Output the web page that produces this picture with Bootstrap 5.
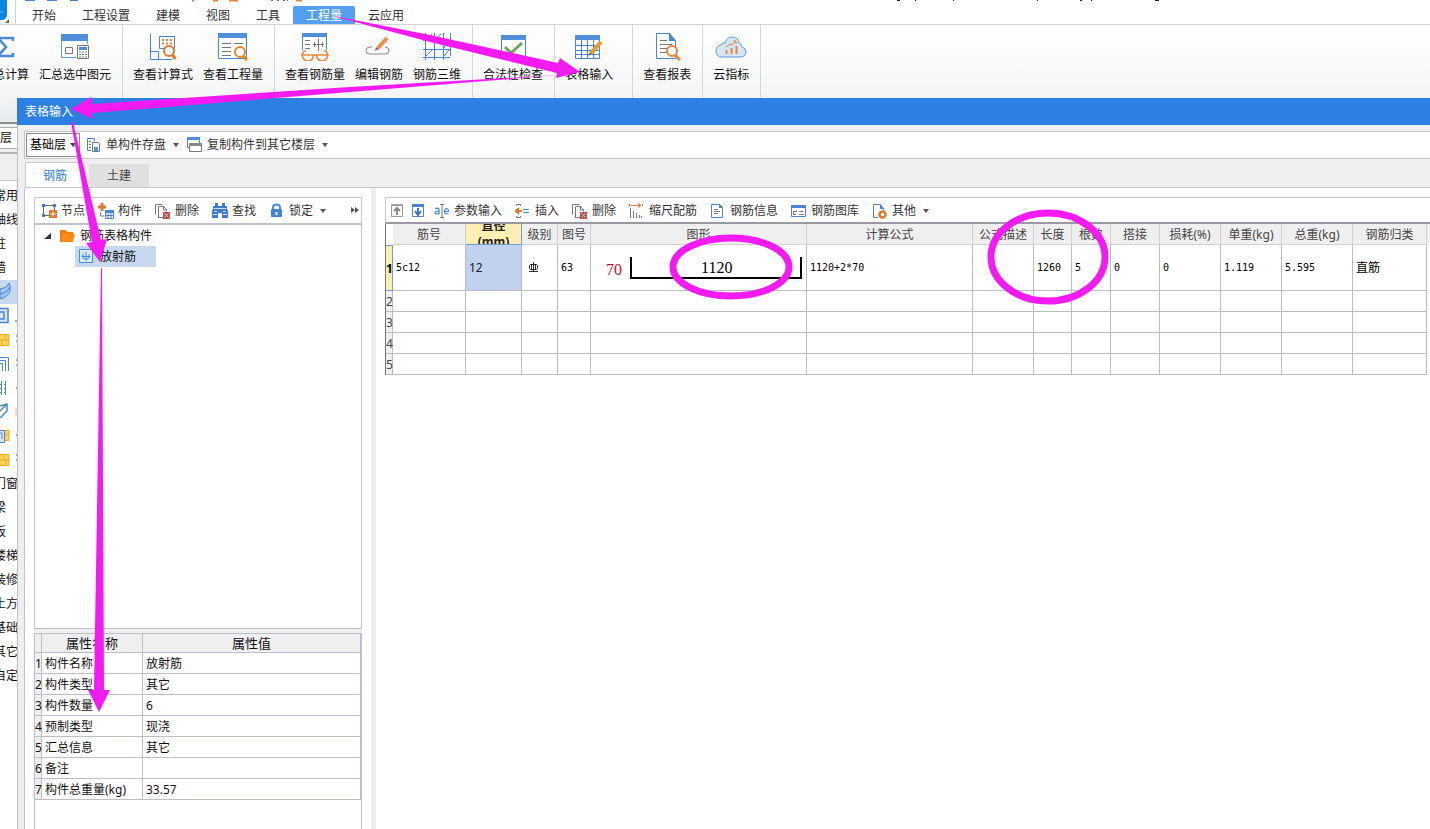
<!DOCTYPE html>
<html lang="zh-CN">
<head>
<meta charset="utf-8">
<meta name="viewport" content="width=device-width, initial-scale=1">
<title>表格输入</title>
<link href="https://cdn.jsdelivr.net/npm/bootstrap@5.3.0/dist/css/bootstrap.min.css" rel="stylesheet">
<style>
  body { font: 12px/16px "Noto Sans", "Noto Sans CJK SC", sans-serif; color: #111; background: #fff; overflow: hidden; }
  svg { display: block; flex: none; }
  a { color: inherit; text-decoration: none; }
  button { font: inherit; color: inherit; border: 0; background: none; padding: 0; white-space: nowrap; }

  .menu-strip { height: 25px; padding: 6px 0 0 19px; border-bottom: 1px solid #d2d2d2; }
  .menu-strip a { padding: 1px 13px 0; line-height: 17px; color: #333; }
  .menu-strip a.active { background: #559ff0; color: #fff; border-radius: 2px 2px 0 0; }
  .app-logo { top: 0; left: 0; }

  .ribbon { height: 73px; background: linear-gradient(#fff, #f4f5f5); }
  .ribbon-group { gap: 10px; padding: 8px 11px 0 10px; border-right: 1px solid #d5d8da; }
  .ribbon-group.first-group { margin-left: -29px; }
  .ribbon-group.wide-end { padding-right: 19px; }
  .ribbon-group button { display: flex; flex-direction: column; align-items: center; gap: 6px; align-self: flex-start; }

  .rail { width: 17px; background: #fff; }
  .rail-top { height: 26px; background: linear-gradient(#f4f5f5, #e6eaea); border-bottom: 2px solid #8d9193; }
  .rail-floor { height: 22px; margin: 3px 0; line-height: 20px; border: 1px solid #aaa; border-left: 0; border-right: 0; }
  .rail-head { height: 29px; background: #efefef; border-top: 2px solid #b4b4b4; border-bottom: 1px solid #c8c8c8; }
  .rail-bg { background: #efefef; }
  .rail ul { margin: 3px 0 0; }
  .rail li { height: 24px; line-height: 24px; white-space: nowrap; }
  .rail li a { margin-left: -6px; }
  .rail li.chosen { background: #c8d8ee; }

  .dialog-box { background: #efefef; box-shadow: inset 1px 0 #b9bdc6; }
  .dialog-title { height: 27px; padding-left: 8px; background: #2b80e2; color: #fff; line-height: 28px; }
  .file-bar { height: 28px; margin: 6px 0 0 7px; padding-left: 1px; background: #fff; border: 1px solid #c4c4c4; border-right: 0; }
  .floor-select { width: 54px; height: 24px; margin-right: 6px; padding: 0 0 0 3px; font: inherit; line-height: 22px; color: #000; border: 1px solid #8c8c8c; border-radius: 0; background-color: #fff; background-position: right 3px center; background-size: 6px 4px;
    background-image: url("data:image/svg+xml,%3csvg xmlns='http://www.w3.org/2000/svg' viewBox='0 0 6 4'%3e%3cpath d='M0 0h6L3 4z' fill='%23444'/%3e%3c/svg%3e"); }
  .caret { width: 0; border: 3px solid transparent; border-top: 4px solid #555; border-bottom: 0; margin-left: 3px; }
  .tool { display: flex; align-items: center; gap: 4px; color: #333; }

  .page-tabs { margin: 4px 0 0 8px; height: 25px; border-bottom: 1px solid #c8c8c8; }
  .page-tabs button { width: 60px; padding-top: 1px; text-align: center; color: #444; background: #e0e0e0; height: 23px; border-radius: 2px 2px 0 0; }
  .page-tabs button.active { height: 25px; background: #fff; color: #2b7bd8; border: 1px solid #c8c8c8; border-bottom: 0; }
  .page-body { margin-left: 7px; background: #fff; border-left: 1px solid #c4c4c4; }

  .left-pane { width: 346px; padding: 9px 9px 0; }
  .tool-row { height: 26px; gap: 13px; border: 1px solid #c8c8c8; border-bottom: 0; }
  .left-pane .tool-row { padding: 0 2px 0 6px; }
  .tree-box { height: 406px; border: 1px solid #c0c0c8; border-top: 2px solid #c0c4cc; padding: 0 0 0 9px; }
  .tree-row { height: 21px; gap: 4px; }
  .tree-row.child { width: 81px; margin-left: 31px; padding-left: 4px; gap: 6px; background: #c8d8ee; }
  .divider { width: 5px; background: #eee; }
  .h-divider { height: 4px; background: #efefef; }

  table { border-collapse: separate; border-spacing: 0; table-layout: fixed; }
  th { font-weight: 400; text-align: center; background: #efefef; }
  .prop-box { border: 1px solid #bcbfca; border-bottom: 0; }
  .prop-table { width: 100%; }
  .prop-table th, .prop-table td { height: 21px; padding: 1px 0 0 3px; border-right: 1px solid #bcbfca; border-bottom: 1px solid #bcbfca; white-space: nowrap; }
  .prop-table thead th { height: 19px; padding: 0; font-size: 13px; }
  .prop-table tbody th, .grid-table tbody th { padding: 1px 0 0; }
  .w-num { width: 7px; } .w-name { width: 101px; }

  .right-pane { min-width: 0; padding: 9px 0 0 9px; }
  .right-pane .tool-row { height: 27px; padding: 1px 0 0 3px; border-bottom: 2px solid #9a98a4; border-right: 0; }
  .arrow-pair { gap: 4px; margin-right: -5px; }
  .grid-box { border-left: 1px solid #777; }
  .grid-table { width: 1041px; flex: none; }
  .grid-table th, .grid-table td { height: 21px; padding: 0 0 0 3px; border-right: 1px solid #bcbcbc; border-bottom: 1px solid #bcbcbc; white-space: nowrap; }
  .grid-table thead th { padding: 2px 0 0; color: #444; border-color: #d2d2d2; }
  .grid-table thead th.corner { background: #fff; border-color: #fff; }
  .grid-table tbody td { font-family: "DejaVu Sans Mono", "Noto Sans CJK SC", monospace; font-size: 10px; color: #000; }
  .grid-table td.han { font-size: 12px; }
  .grid-table .first-row > * { height: 46px; }
  .grid-table thead th.hot { padding: 0; background: #fdefb4; color: #222; font-weight: 700; border-color: #6da0d8; }
  .hot div { height: 20px; line-height: 16px; overflow: hidden; display: flex; align-items: center; justify-content: center; }
  .grid-table tbody th { font-size: 12px; color: #444; }
  .grid-table tbody .first-row th { background: #fdefb4; font-weight: 700; color: #000; border: 1px solid #6da0d8; border-left: 0; }
  .grid-table tbody td.hot-cell { background: #c1d1f0; font-family: inherit; font-size: 12px; color: #222; }
  .grid-rest { height: 21px; background: #efefef; }
  .shape-text { font: 16px "Liberation Serif", serif; }
  .marks { top: 0; left: 0; pointer-events: none; }
</style>
</head>
<body class="d-flex flex-column min-vh-100 position-relative">

<header class="menu-strip position-relative">
  <svg class="app-logo position-absolute" width="1200" height="24" viewBox="0 0 1200 24">
    <path d="M0 0h7v14q0 6-6 6H0z" fill="#0b83e8"/><path d="M0 12h3" stroke="#7cc4fb"/>
    <path d="M9 19v4H5z" fill="#666"/><path d="M15.500 0v24" stroke="#d2d2d2"/>
    <path d="M25 0h10M47 0h10M70 0h8" stroke="#4b84cf" stroke-width="2"/>
    <path d="M192 0h2M213 0h5M229 0h9M296 0h6" stroke="#e8853a" stroke-width="3"/><path d="M271 0h2M277 0h2M283 0h2M287 0h1" stroke="#666" stroke-width="2"/>
    <path d="M897 0h3M915 0h1M953 0h1M1037 0h1M1080 0h2M1091 0h1M1155 0h4" stroke="#222" stroke-width="2"/>
  </svg>
  <nav class="d-flex">
    <a href="#">开始</a><a href="#">工程设置</a><a href="#">建模</a><a href="#">视图</a><a href="#">工具</a><a href="#" class="active">工程量</a><a href="#">云应用</a>
  </nav>
</header>

<div class="ribbon d-flex">
  <div class="ribbon-group first-group d-flex">
    <button type="button"><svg width="28" height="28" viewBox="0 0 28 28"><path d="M22 8V5H7l8 9-8 9h15v-3" fill="none" stroke="#4b8ad8" stroke-width="2.500"/></svg>汇总计算</button>
    <button type="button"><svg width="28" height="28" viewBox="0 0 28 28"><path d="M.5 1.500h26v23H.5z" fill="#fff" stroke="#5b9ade"/><path d="M0 1h27v7H0z" fill="#4f8edb"/><path d="M4.500 14.500h7v6h-7z" fill="none" stroke="#777"/><path d="M15 11h13v15H15z" fill="#fff"/><path d="M16.500 12.500h11v13h-11z" fill="#fff" stroke="#777"/><path d="M18 14h8v3h-8z" fill="#4f8edb"/><path d="M18 19h8M18 21.500h8M18 24h8" stroke="#777" stroke-dasharray="2 1"/></svg>汇总选中图元</button>
  </div>
  <div class="ribbon-group d-flex">
    <button type="button"><svg width="28" height="28" viewBox="0 0 28 28"><path d="M1.500 1v25.500h8v-8h-8M9 26.500h14M10.500 3.500h15v12h-15z" fill="none" stroke="#4b84cf"/><path d="M13 7h10M13 10.500h10" stroke="#e8853a" stroke-width="2" stroke-dasharray="2 2"/><circle cx="20" cy="18" r="5" fill="#fff" stroke="#e2772e" stroke-width="2"/><path d="M23.500 22l3 4" stroke="#e2772e" stroke-width="3"/></svg>查看计算式</button>
    <button type="button"><svg width="30" height="28" viewBox="0 0 30 28"><path d="M.5.500h28v25H.5z" fill="#fff" stroke="#4b84cf"/><path d="M0 0h29v5H0z" fill="#4f8edb"/><path d="M4 10.500h9M16 10.500h9M4 14.500h9M4 18.500h9M4 22.500h9" stroke="#777"/><circle cx="22" cy="19" r="5" fill="#fff" stroke="#e08a1c" stroke-width="2"/><path d="M25 23l4 4" stroke="#e08a1c" stroke-width="3"/></svg>查看工程量</button>
  </div>
  <div class="ribbon-group d-flex">
    <button type="button"><svg width="30" height="28" viewBox="0 0 30 28"><path d="M2.500 17V1h24v16" fill="#fff" stroke="#4b84cf"/><path d="M2 0h25v4H2z" fill="#4f8edb"/><path d="M5 7.500h5M5 11.500h5M5 15.500h5M18.500 6v12M13 11.500h11M14.500 9v5M22.500 9v5" stroke="#777" fill="none"/><path d="M2 22l2-4h2M28 22l-2-4h-2" stroke="#e8853a" fill="none" stroke-width="1.500"/><path d="M2 22h11v3q-2 3-5 3t-5-3zM17 22h11l-1 3q-2 3-5 3t-5-3zM13 23q2-2 4 0" fill="none" stroke="#e8853a" stroke-width="1.500"/></svg>查看钢筋量</button>
    <button type="button"><svg width="28" height="28" viewBox="0 0 28 28"><path d="M7 14H5q-4 0-4 3.500t4 3.500h15q4 0 4-3.500t-4-3.500" fill="none" stroke="#888"/><path d="M13 15l9-10" stroke="#ea9145" stroke-width="4"/><path d="M10 18l1-4 3 2z" fill="#a56"/></svg>编辑钢筋</button>
    <button type="button"><svg width="28" height="28" viewBox="0 0 28 28"><path d="M2.500 0v27M11.500 0v27M20.500 0v27M27.500 0v23M0 7.500h28M0 16.500h28M0 24.500h27M2 7l7-6M11 7l7-6M20 16l7-8M2 24l8-8M20 24l7-8" fill="none" stroke="#4b84cf"/></svg>钢筋三维</button>
  </div>
  <div class="ribbon-group d-flex">
    <button type="button"><svg width="28" height="28" viewBox="0 0 28 28"><path d="M2.500 3.500h24v22h-24z" fill="#fff" stroke="#4b84cf"/><path d="M2 2h25v5H2z" fill="#4f8edb"/><path d="M6 14l6 6 11-10" fill="none" stroke="#6ba45b" stroke-width="3"/></svg>合法性检查</button>
  </div>
  <div class="ribbon-group wide-end d-flex">
    <button type="button"><svg width="28" height="28" viewBox="0 0 28 28"><path d="M.5 3.500h24v22H.5zM6.500 7v18M12.500 7v18M18.500 7v18M0 12.500h24M0 17.500h24M0 21.500h24" fill="#fff" stroke="#4b84cf"/><path d="M0 2h25v5H0z" fill="#4f8edb"/><path d="M16 20L26 9" stroke="#e39a2c" stroke-width="4"/><path d="M13 23l2-4 2 2z" fill="#96632c"/></svg>表格输入</button>
  </div>
  <div class="ribbon-group d-flex">
    <button type="button"><svg width="28" height="28" viewBox="0 0 28 28"><path d="M3.500.500h13l6 7v18h-19z" fill="#fff" stroke="#4b84cf"/><path d="M16 0v8h7z" fill="#4b84cf"/><path d="M7 7.500h7M7 11.500h12M7 15.500h8M7 19.500h7" stroke="#777"/><circle cx="19" cy="18" r="5" fill="#fff" stroke="#e8853a" stroke-width="2"/><path d="M22 22l5 5" stroke="#e8853a" stroke-width="3"/></svg>查看报表</button>
  </div>
  <div class="ribbon-group d-flex">
    <button type="button"><svg width="32" height="28" viewBox="0 0 32 28"><path d="M7 24q-6 0-6-6 0-5 5-6 1-3 4-2 2-6 7-6 6 0 7 6 3 1 3 4 4 1 4 5t-5 5z" fill="#d5e6fa" stroke="#5b9ade"/><path d="M11.500 21v-4M16.500 21v-6M21.500 21v-8" stroke="#e8853a" stroke-width="2"/><path d="M11 14l4-3 2 1 4-4M18 8h3v3" fill="none" stroke="#e8853a"/></svg>云指标</button>
  </div>
</div>

<div class="d-flex flex-grow-1">
  <aside class="rail overflow-hidden flex-shrink-0">
    <div class="rail-top"></div>
    <div class="rail-bg overflow-hidden">
      <div class="rail-floor bg-white">层</div>
      <div class="rail-head"></div>
    </div>
    <ul class="list-unstyled">
      <li><a href="#">常用</a></li><li><a href="#">轴线</a></li><li><a href="#">柱</a></li><li><a href="#">墙</a></li>
      <li class="chosen"><svg width="17" height="24" viewBox="0 0 17 24"><path d="M0 9q7-1 9-6l1 2v6q-2 6-10 8z" fill="#9cc5f4" stroke="#4b84cf"/><path d="M0 14q7-1 10-7" fill="none" stroke="#4b84cf"/></svg></li>
      <li><svg width="17" height="24" viewBox="0 0 17 24"><path d="M0 4.500h8v14H0M0 8h4v7H0" fill="#d6e7fb" stroke="#4b84cf" stroke-width="1.500"/><path d="M15 17h2" stroke="#555"/></svg></li>
      <li><svg width="17" height="24" viewBox="0 0 17 24"><path d="M0 6.500h9v11H0M0 12h9M5 6v6M2 12v6" fill="#ffd25c" stroke="#e6a927"/><path d="M16 8h1M16 13h1" stroke="#555"/></svg></li>
      <li><svg width="17" height="24" viewBox="0 0 17 24"><path d="M0 5.500h8.500V19M0 8.500h5.500V19M0 11.500h2.500V19" fill="none" stroke="#4b84cf"/><path d="M16 8h1M16 13h1" stroke="#555"/></svg></li>
      <li><svg width="17" height="24" viewBox="0 0 17 24"><path d="M1.500 5v14M5.500 5v14" stroke="#4b84cf"/><path d="M0 8.500h8M0 12.500h8M0 16.500h8" stroke="#4b84cf" stroke-dasharray="2 2"/><path d="M16 12h1" stroke="#555"/></svg></li>
      <li><svg width="17" height="24" viewBox="0 0 17 24"><path d="M0 6l7-2v7l-7 7M0 11l7-7" fill="none" stroke="#4b84cf" stroke-width="1.500"/><path d="M16 8v8" stroke="#f5b98c"/></svg></li>
      <li><svg width="17" height="24" viewBox="0 0 17 24"><path d="M4 6.500h5v10H4zM4 11h5" fill="#ffd25c" stroke="#e6a927"/><path d="M0 6.500h4.500v12H0M0 9h2v6" fill="#d6e7fb" stroke="#4b84cf"/><path d="M16 11h1" stroke="#555"/></svg></li>
      <li><svg width="17" height="24" viewBox="0 0 17 24"><path d="M0 6.500h9v11H0M0 12h9M4 6v6M6 12v6" fill="#ffd25c" stroke="#e6a927"/><path d="M16 7h1M16 12h1" stroke="#555"/></svg></li>
      <li><a href="#">门窗</a></li><li><a href="#">梁</a></li><li><a href="#">板</a></li><li><a href="#">楼梯</a></li><li><a href="#">装修</a></li><li><a href="#">土方</a></li><li><a href="#">基础</a></li><li><a href="#">其它</a></li><li><a href="#">自定</a></li>
    </ul>
  </aside>

  <main class="dialog-box d-flex flex-column flex-grow-1 overflow-hidden">
    <div class="dialog-title">表格输入</div>
    <div class="file-bar d-flex align-items-center flex-shrink-0">
      <select class="form-select floor-select" aria-label="楼层"><option>基础层</option></select>
      <button type="button" class="tool me-2"><svg width="16" height="16" viewBox="0 0 16 16"><path d="M5 13.500H1.500V1.500h7V4M3 4.500h2M3 7.500h2M3 10.500h2" fill="none" stroke="#4b84cf"/><path d="M6.500 5.500h6l1 1v8h-7z" fill="#fff" stroke="#6a7a90"/><path d="M8 10h4v4H8z" fill="#5d92d6"/></svg>单构件存盘<span class="caret"></span></button>
      <button type="button" class="tool"><svg width="16" height="16" viewBox="0 0 16 16"><path d="M.5.500h12v10H.5z" fill="#fff" stroke="#4b84cf"/><path d="M0 0h13v3H0z" fill="#4f8edb"/><path d="M2.500 6.500h12v8h-12z" fill="#fff" stroke="#777"/><path d="M2 6h13v3H2z" fill="#888"/></svg>复制构件到其它楼层<span class="caret"></span></button>
    </div>
    <div class="page-tabs d-flex align-items-end flex-shrink-0 gap-1">
      <button type="button" class="active">钢筋</button><button type="button">土建</button>
    </div>

    <div class="page-body d-flex flex-grow-1">
      <section class="left-pane d-flex flex-column flex-shrink-0">
        <div class="tool-row d-flex align-items-center">
          <button type="button" class="tool"><svg width="16" height="16" viewBox="0 0 16 16"><path d="M2.500 2.500h11v10h-11z" fill="none" stroke="#666"/><path d="M1 1h3v3H1zM12 1h3v3h-3zM1 11h3v3H1z" fill="#3f7fd0"/><path d="M8 7h8v8H8z" fill="#e2772e"/><path d="M12 8.500v5M9.500 11h5" stroke="#fff"/></svg>节点</button>
          <button type="button" class="tool"><svg width="16" height="16" viewBox="0 0 16 16"><path d="M4 0v8M0 4h8" stroke="#e2772e" stroke-width="3"/><path d="M2.500 9v4H6" fill="none" stroke="#777"/><path d="M7.500 7.500h8v8h-8zM10 9v6M13 9v6M7 12.500h8" fill="#fff" stroke="#4b84cf"/><path d="M7 7h9v3H7z" fill="#4b84cf"/></svg>构件</button>
          <button type="button" class="tool"><svg width="16" height="16" viewBox="0 0 16 16"><path d="M.5 11.500v-10h7M3.500 14.500v-11h5l3 3v2M3 14.500h5M8.500 3v4h3" fill="none" stroke="#777"/><path d="M8 9h7v7H8z" fill="#c64b45"/><path d="M9.500 10.500l4 4m0-4l-4 4" stroke="#fff"/></svg>删除</button>
          <button type="button" class="tool"><svg width="16" height="16" viewBox="0 0 16 16"><path d="M3 0h3v3h4V0h3v3h2v4h1v8h-6v-5H6v5H0V7h1V3h2z" fill="#3d7cc9"/><path d="M1 11.500h4M11 11.500h4M2 5.500h12M2 8.500h3M11 8.500h3" stroke="#cfe0f5"/></svg>查找</button>
          <button type="button" class="tool"><svg width="16" height="16" viewBox="0 0 16 16"><path d="M4 7V4.500Q4 1.500 7.500 1.500T11 4.500V7" fill="none" stroke="#4b8ad8" stroke-width="2"/><rect x="2" y="6" width="11" height="8" rx="1" fill="#3f83d6"/><path d="M7.500 9v3" stroke="#fff" stroke-width="2"/></svg>锁定<span class="caret"></span></button>
          <svg class="ms-auto" width="8" height="8" viewBox="0 0 8 8"><path d="M0 0l4 3-4 3zM4 0l4 3-4 3z" fill="#555"/></svg>
        </div>
        <div class="tree-box flex-shrink-0">
          <div class="tree-row d-flex align-items-center"><svg width="8" height="8" viewBox="0 0 8 8"><path d="M7 1v6H0z" fill="#333"/></svg><svg class="ms-1" width="16" height="14" viewBox="0 0 16 14"><path d="M0 1h6l1 2h6v2H4l-2 8H0z" fill="#f77d0e"/><path d="M4 5h11l-2 8H2z" fill="#ff8a14"/></svg>钢筋表格构件</div>
          <div class="tree-row child d-flex align-items-center"><svg width="15" height="15" viewBox="0 0 15 15"><path d="M.5.500h13v13H.5z" fill="#d9ebff" stroke="#3f8fe8"/><path d="M7 3v9M2.500 7.500h9M4 5v4q3 3 6 0V5" fill="none" stroke="#3f8fe8"/></svg>放射筋</div>
        </div>
        <div class="h-divider flex-shrink-0"></div>
        <div class="prop-box flex-grow-1">
          <table class="prop-table">
            <colgroup><col class="w-num"><col class="w-name"><col></colgroup>
            <thead><tr><th></th><th>属性名称</th><th>属性值</th></tr></thead>
            <tbody>
              <tr><th>1</th><td>构件名称</td><td>放射筋</td></tr>
              <tr><th>2</th><td>构件类型</td><td>其它</td></tr>
              <tr><th>3</th><td>构件数量</td><td>6</td></tr>
              <tr><th>4</th><td>预制类型</td><td>现浇</td></tr>
              <tr><th>5</th><td>汇总信息</td><td>其它</td></tr>
              <tr><th>6</th><td>备注</td><td></td></tr>
              <tr><th>7</th><td>构件总重量(kg)</td><td>33.57</td></tr>
            </tbody>
          </table>
        </div>
      </section>
      <div class="divider flex-shrink-0"></div>
      <section class="right-pane flex-grow-1">
        <div class="tool-row d-flex align-items-center">
          <div class="arrow-pair d-flex">
            <button type="button" aria-label="上移"><svg width="17" height="16" viewBox="0 0 17 16"><path d="M2.500 2.500h11v11h-11z" fill="#fff" stroke="#999"/><path d="M2 1.500h12" stroke="#aaa"/><path d="M8 12V6M5 8l3-3 3 3" fill="none" stroke="#888" stroke-width="2"/></svg></button>
            <button type="button" aria-label="下移"><svg width="16" height="16" viewBox="0 0 16 16"><path d="M2.500 2.500h11v11h-11z" fill="#fff" stroke="#4b84cf"/><path d="M2 1h12v3H2z" fill="#4b84cf"/><path d="M8 5v6M5 8l3 4 3-4" fill="none" stroke="#3474c4" stroke-width="2"/></svg></button>
          </div>
          <button type="button" class="tool"><svg width="16" height="16" viewBox="0 0 16 16"><path d="M6 1.500h4M6 14.500h4M8 2v12" stroke="#777"/><path d="M1 5.500q4-1 4 1.500v4.500M5 8q-4 0-4 2t4 0M10.500 8.500h4q0-3-2-3t-2 3q0 3 4 2" fill="none" stroke="#3f83d6" stroke-width="1.200"/></svg>参数输入</button>
          <button type="button" class="tool"><svg width="16" height="16" viewBox="0 0 16 16"><path d="M1.500 3V1.500h4V3M1.500 13v1.500h4V13" fill="none" stroke="#777"/><path d="M1 8h6M4 5L1 8l3 3" fill="none" stroke="#e2772e" stroke-width="2"/><path d="M8 6.500h6M8 9.500h6" stroke="#4b84cf"/></svg>插入</button>
          <button type="button" class="tool"><svg width="16" height="16" viewBox="0 0 16 16"><path d="M.5 11.500v-10h7M3.500 14.500v-11h5l3 3v2M3 14.500h5M8.500 3v4h3" fill="none" stroke="#777"/><path d="M8 9h7v7H8z" fill="#c64b45"/><path d="M9.500 10.500l4 4m0-4l-4 4" stroke="#fff"/></svg>删除</button>
          <button type="button" class="tool"><svg width="16" height="16" viewBox="0 0 16 16"><path d="M2 2.500h9M9 .500l3 2-3 2" fill="none" stroke="#e2772e"/><path d="M.5 1v2M13.500 1v2M1.500 5v10M4.500 8v7M7.500 10v5M10.500 12v3" stroke="#777"/><path d="M12.500 13v2" stroke="#4b84cf"/></svg>缩尺配筋</button>
          <button type="button" class="tool"><svg width="16" height="16" viewBox="0 0 16 16"><path d="M1.500 1.500h8l3 3v10h-11z" fill="#fff" stroke="#4b84cf"/><path d="M9 1v4h4z" fill="#4b84cf"/><path d="M4 6.500h4M4 8.500h6M4 10.500h4" stroke="#777"/></svg>钢筋信息</button>
          <button type="button" class="tool"><svg width="16" height="16" viewBox="0 0 16 16"><path d="M.5 2.500h14v11H.5z" fill="#fff" stroke="#4b84cf"/><path d="M0 2h15v3H0z" fill="#4b84cf"/><path d="M2 8.500h4M2.500 8v3M2 11.500h3M8 8.500h4M8 11.500h5" stroke="#777"/></svg>钢筋图库</button>
          <button type="button" class="tool"><svg width="16" height="16" viewBox="0 0 16 16"><path d="M6 14.500H1.500V1.500h7l3 4V7" fill="#fff" stroke="#4b84cf"/><path d="M8 1v5h4z" fill="#4b84cf"/><circle cx="10.500" cy="11.500" r="3" fill="#fff" stroke="#e2772e" stroke-width="2.500"/></svg>其他<span class="caret"></span></button>
        </div>
        <div class="grid-box d-flex overflow-hidden">
          <table class="grid-table">
            <colgroup><col width="7"><col width="73"><col width="56"><col width="36"><col width="33"><col width="216"><col width="166"><col width="61"><col width="38"><col width="39"><col width="49"><col width="61"><col width="61"><col width="71"><col width="74"></colgroup>
            <thead><tr><th class="corner"></th><th>筋号</th><th class="hot"><div>直径<br>(mm)</div></th><th>级别</th><th>图号</th><th>图形</th><th>计算公式</th><th>公式描述</th><th>长度</th><th>根数</th><th>搭接</th><th>损耗(%)</th><th>单重(kg)</th><th>总重(kg)</th><th>钢筋归类</th></tr></thead>
            <tbody>
              <tr class="first-row"><th>1</th><td>5c12</td><td class="hot-cell">12</td>
                <td><svg class="ms-1" width="10" height="11" viewBox="0 0 10 11"><path d="M4.500 0v10M.5 3.500v3l1 1h6l1-1v-3l-1-1h-6zM2.500 2v6M6.500 2v6M0 9.500h9" fill="none" stroke="#000" stroke-width=".8"/></svg></td>
                <td>63</td>
                <td><svg width="212" height="44" viewBox="0 0 212 44"><path d="M37 11v21h170V11" fill="none" stroke="#000" stroke-width="2"/><text class="shape-text" x="12" y="29" fill="#c8102e">70</text><text class="shape-text" x="107" y="27">1120</text></svg></td>
                <td>1120+2*70</td><td></td><td>1260</td><td>5</td><td>0</td><td>0</td><td>1.119</td><td>5.595</td><td class="han">直筋</td></tr>
              <tr><th>2</th><td></td><td></td><td></td><td></td><td></td><td></td><td></td><td></td><td></td><td></td><td></td><td></td><td></td><td></td></tr>
              <tr><th>3</th><td></td><td></td><td></td><td></td><td></td><td></td><td></td><td></td><td></td><td></td><td></td><td></td><td></td><td></td></tr>
              <tr><th>4</th><td></td><td></td><td></td><td></td><td></td><td></td><td></td><td></td><td></td><td></td><td></td><td></td><td></td><td></td></tr>
              <tr><th>5</th><td></td><td></td><td></td><td></td><td></td><td></td><td></td><td></td><td></td><td></td><td></td><td></td><td></td><td></td></tr>
            </tbody>
          </table>
          <div class="grid-rest flex-grow-1"></div>
        </div>
      </section>
    </div>
  </main>
</div>

<svg class="marks position-absolute" width="1430" height="829" viewBox="0 0 1430 829">
  <g fill="#f41bf2">
    <path d="M329 15L430 35 558 63 560 58 580 72 556 78 557 73 430 42z"/>
    <path d="M558 75L350 92 92 113 92 119 71 109 91 97 92 104 350 87z"/>
    <path d="M71 122L73 122 101 240 107 239 100 262 86 243 92 242z"/>
    <path d="M101 268L102 268 104 690 110 690 99 712 88 690 94 690z"/>
  </g>
  <g fill="none" stroke="#f41bf2" stroke-width="7"><ellipse cx="731" cy="267" rx="58" ry="29"/><ellipse cx="1048" cy="257" rx="57" ry="44"/></g>
</svg>

<script src="https://cdn.jsdelivr.net/npm/bootstrap@5.3.0/dist/js/bootstrap.bundle.min.js"></script>
</body>
</html>
